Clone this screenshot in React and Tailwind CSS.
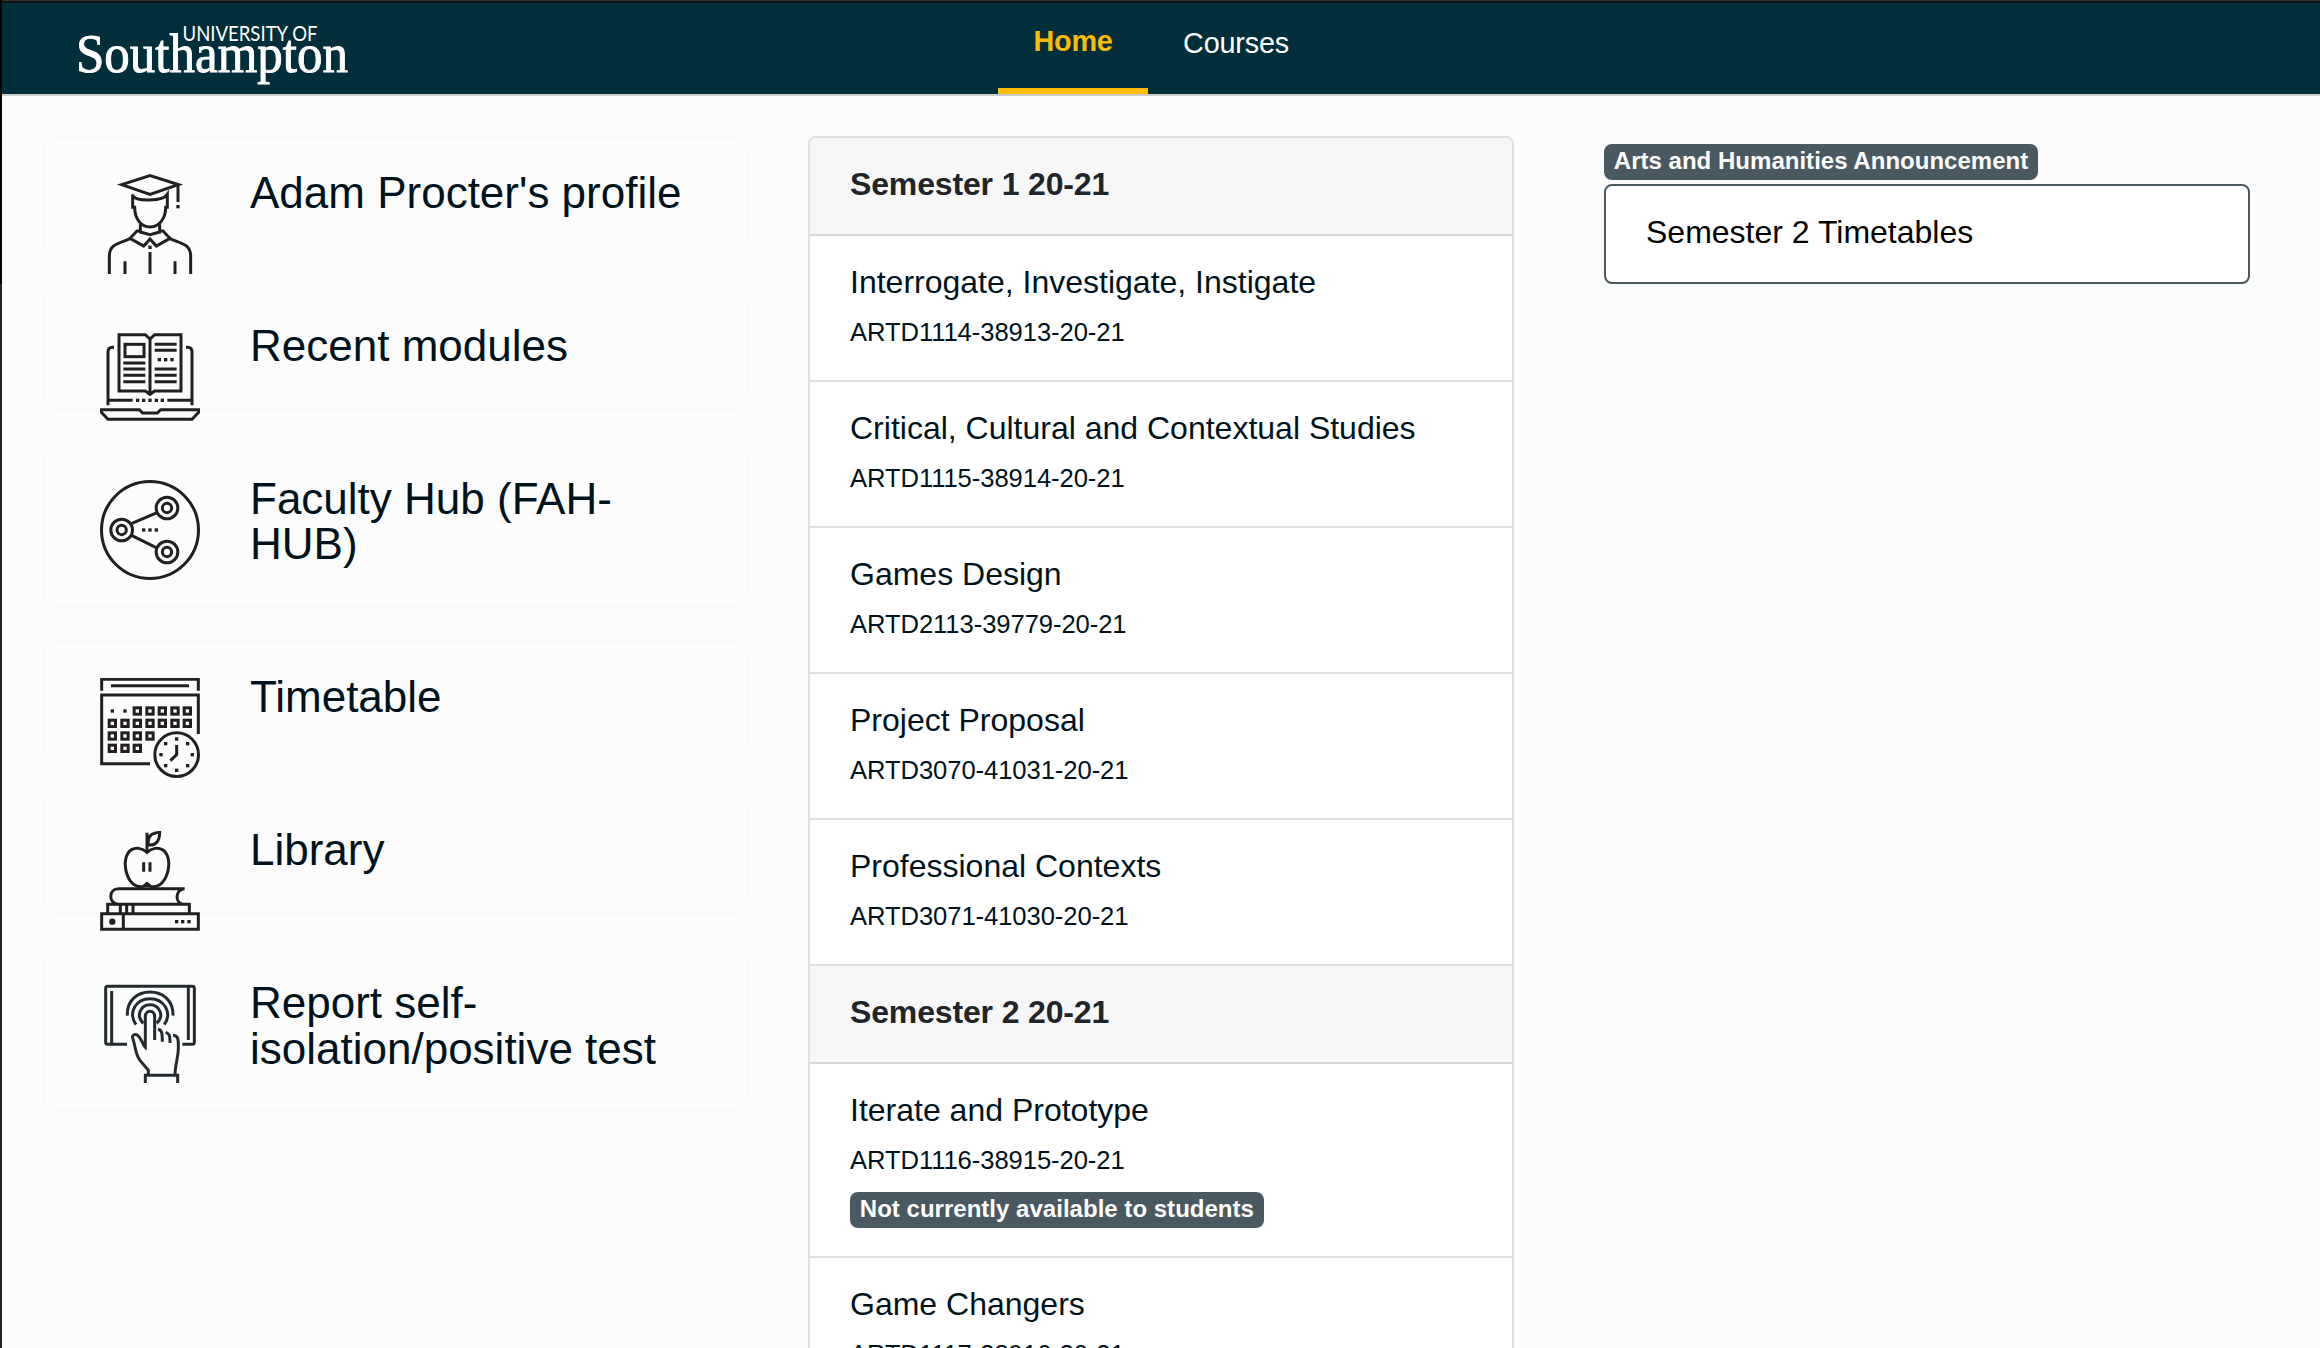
import React from "react";

const ink = "#231f20";

function Icon({ top, color = ink, children }) {
  return (
    <svg
      className="h-[100px] w-[100px] shrink-0"
      viewBox={`60 ${top} 300 300`}
      fill="none"
      stroke={color}
      strokeWidth="9"
    >
      {children}
    </svg>
  );
}

function Dots({ points, size = 10, color = ink }) {
  return (
    <g fill={color} stroke="none">
      {points.map(([x, y]) => (
        <rect key={`${x}-${y}`} x={x - size / 2} y={y - size / 2} width={size} height={size} />
      ))}
    </g>
  );
}

function GraduateIcon() {
  return (
    <Icon top={42}>
      <path d="M125 74 L210 47 L295 74 L210 103 Z" />
      <path d="M294 72 V126" />
      <path d="M158 103 V142 H164 C164 178 184 201 210 201 C236 201 257 178 257 142 H262 V103 C248 125 172 125 158 108" />
      <path d="M181 193 V216 L210 224 L239 216 V193" />
      <path d="M181 213 H171 L150 235 L191 258 L210 237 L229 258 L270 235 L249 213 H239" />
      <path d="M88 342 V287 C88 251 122 249 152 235 M332 342 V287 C332 251 298 249 268 235" />
      <path d="M135 304 V342 M210 276 V342 M285 304 V342" />
      <Dots points={[[294, 140], [210, 262]]} />
    </Icon>
  );
}

function ModulesIcon() {
  return (
    <Icon top={51}>
      <path d="M117 74 H196 L210 87 L224 74 H303 V243 H224 L210 253 L196 243 H117 Z M210 84 V252" />
      <rect x="135" y="103" width="57" height="37" />
      <path d="M130 159 H196 M130 177 H196 M130 196 H196 M130 215 H196 M224 103 H290 M224 121 H290 M224 177 H290 M224 196 H290 M224 215 H290" />
      <path d="M102 112 H98 Q84 112 84 126 V286 M318 112 H322 Q336 112 336 126 V286 M84 271 H158 M262 271 H336" />
      <path d="M64 299 H178 L188 309 H232 L242 299 H356 V307 L336 328 H84 L64 307 Z" />
      <Dots points={[[238, 149], [257, 149], [276, 149], [173, 271], [191, 271], [210, 271], [229, 271], [247, 271]]} />
    </Icon>
  );
}

function HubIcon() {
  return (
    <Icon top={60}>
      <circle cx="210" cy="210" r="145.500" />
      {[[125, 210], [261, 144], [261, 276]].map(([x, y]) => (
        <g key={`${x}-${y}`}>
          <circle cx={x} cy={y} r="32.500" />
          <circle cx={x} cy={y} r="14" />
        </g>
      ))}
      <path d="M154 191 L233 157 M156 227 L233 265" />
      <Dots points={[[191, 210], [210, 210], [229, 210]]} />
    </Icon>
  );
}

const columns = [97, 135, 172, 210, 247, 285, 322];
const dayCells = [
  ...columns.slice(2).map((x) => [x, 153]),
  ...columns.map((x) => [x, 190]),
  ...columns.slice(0, 4).map((x) => [x, 228]),
  ...columns.slice(0, 3).map((x) => [x, 265]),
];

function TimetableIcon() {
  return (
    <Icon top={54}>
      <path d="M65 92 V58 H355 V92 M93 77 H327" />
      <path d="M210 311 H65 V105 H355 V222" />
      {dayCells.map(([x, y]) => (
        <rect key={`${x}-${y}`} x={x - 9.5} y={y - 9.5} width="19" height="19" />
      ))}
      <circle cx="290" cy="284" r="70" fill="#fcfcfc" stroke="none" />
      <circle cx="290" cy="284" r="65.500" />
      <path d="M290 255 V284 L271 302" />
      <Dots points={[[97, 153], [135, 153], [290, 237], [323, 251], [337, 284], [323, 317], [290, 331], [257, 317], [243, 284], [257, 251]]} />
    </Icon>
  );
}

function LibraryIcon() {
  return (
    <Icon top={48}>
      <path d="M201 53 V112 M205 90 C202 60 217 54 239 52 C239 82 225 92 205 90 Z" />
      <path d="M201 112 C186 98 167 97 155 104 C137 114 130 145 141 178 C151 209 172 219 190 214 L201 205 L212 214 C230 219 250 209 261 178 C272 145 265 114 247 104 C235 97 216 98 201 112 Z" />
      <path d="M191 142 V170 M210 142 V170" />
      <path d="M314 221 H116 C84 221 86 265 112 268 M312 221 C286 225 284 262 308 268" />
      <path d="M83 295 V268 H328 V295 M121 268 V295 M140 268 V295 M159 268 V295" />
      <path d="M65 296 H355 V343 H65 Z M130 296 V343" />
      <path d="M193 216 L201 203 L209 216 Z" fill={ink} stroke="none" />
      <circle cx="97" cy="320" r="9.500" fill={ink} stroke="none" />
      <Dots points={[[290, 320], [308, 320], [327, 320]]} />
    </Icon>
  );
}

function TouchIcon() {
  return (
    <Icon top={42} color="#232b2e">
      <path d="M141 223 H83 Q77 223 77 217 V55 Q77 49 83 49 H337 Q343 49 343 55 V217 Q343 223 337 223 H307" />
      <path d="M95 63 V223 M325 49 V210" />
      <path d="M142 137 C137 42 283 42 279 137" />
      <path d="M168 164 C143 127 168 86 210 86 C252 86 278 127 253 164" />
      <path d="M190 160 C167 138 181 104 210 104 C239 104 254 138 230 160" />
      <path d="M224 210 V139 C224 119 196 119 196 139 V232 C189 226 183 203 174 197 C168 190 155 194 158 204 C166 226 166 254 180 271 L205 301 V317" />
      <path d="M234 178 C245 180 247 187 247 215 M257 187 C268 190 270 196 270 219 M279 196 C291 197 295 202 295 224 C297 260 285 280 285 317" />
      <path d="M196 339 V316 H293 V339" />
    </Icon>
  );
}

const shortcuts = [
  { label: ["Adam Procter's profile"], icon: GraduateIcon },
  { label: ["Recent modules"], icon: ModulesIcon },
  { label: ["Faculty Hub (FAH-", "HUB)"], icon: HubIcon },
  { label: ["Timetable"], icon: TimetableIcon },
  { label: ["Library"], icon: LibraryIcon },
  { label: ["Report self-", "isolation/positive test"], icon: TouchIcon },
];

const semesters = [
  {
    name: "Semester 1 20-21",
    modules: [
      { title: "Interrogate, Investigate, Instigate", code: "ARTD1114-38913-20-21" },
      { title: "Critical, Cultural and Contextual Studies", code: "ARTD1115-38914-20-21" },
      { title: "Games Design", code: "ARTD2113-39779-20-21" },
      { title: "Project Proposal", code: "ARTD3070-41031-20-21" },
      { title: "Professional Contexts", code: "ARTD3071-41030-20-21" },
    ],
  },
  {
    name: "Semester 2 20-21",
    modules: [
      { title: "Iterate and Prototype", code: "ARTD1116-38915-20-21", hidden: true },
      { title: "Game Changers", code: "ARTD1117-38916-20-21" },
    ],
  },
];

function Badge({ children }) {
  return (
    <span className="block h-9 w-fit whitespace-nowrap rounded-lg bg-[#495961] px-[9.8px] text-[24px] leading-[33px] font-bold tracking-[0.02px] text-white">
      {children}
    </span>
  );
}

function Logo() {
  return (
    <svg className="ml-[68px] h-[91px] w-[285px] overflow-visible" viewBox="70 3 285 91" fill="#fff">
      <text
        x="182.500"
        y="40.500"
        fontFamily="Lato, sans-serif"
        fontSize="20.500"
        textLength="135"
        lengthAdjust="spacingAndGlyphs"
      >
        UNIVERSITY OF
      </text>
      <text
        x="76"
        y="71.500"
        fontFamily="'Liberation Serif', serif"
        fontSize="54"
        textLength="272"
        lengthAdjust="spacingAndGlyphs"
        stroke="#fff"
        strokeWidth="0.900"
      >
        Southampton
      </text>
    </svg>
  );
}

export default function App() {
  return (
    <div className="flex h-[1348px] w-[2320px] overflow-hidden bg-[#fcfcfc] font-['Liberation_Sans',Arial,sans-serif] text-[#00131d]">
      <div className="flex w-0.5 shrink-0 flex-col">
        <div className="h-[284px] bg-black" />
        <div className="grow bg-[#222426]" />
      </div>
      <div className="flex min-w-0 grow flex-col">
        <div className="h-px shrink-0 bg-[#333]" />
        <div className="h-0.5 shrink-0 bg-[#111]" />
        <header className="flex h-[93px] shrink-0 border-b-2 border-[#ccc] bg-[#002e3b] text-[28.8px] leading-8">
          <Logo />
          <nav className="ml-[643px] flex">
            <a className="w-[150px] border-b-6 border-[#fcbc00] pt-[22px] text-center font-bold tracking-[-0.2px] text-[#fcbc00]">
              Home
            </a>
            <a className="w-[176px] pt-6 text-center tracking-[-0.2px] text-white">Courses</a>
          </nav>
        </header>

        <main className="flex items-start pl-10">
          <section className="mt-10 flex w-[706px] flex-col gap-8">
            {shortcuts.map(({ label, icon: Glyph }) => (
              <a
                key={label[0]}
                className={`flex shrink-0 items-start rounded-2xl border-2 border-[#f9f9f9] pt-9 pl-14 ${
                  label.length > 1 ? "h-[166.560px]" : "h-[120.800px]"
                }`}
              >
                <Glyph />
                <span className="-mt-1 ml-[50px] text-[44px] leading-[45.76px]">
                  {label.map((line) => (
                    <span key={line} className="block whitespace-nowrap">
                      {line}
                    </span>
                  ))}
                </span>
              </a>
            ))}
          </section>

          <section className="mt-10 ml-[60px] w-[706px] overflow-hidden rounded-lg border-2 border-[#dfdfdf] bg-white">
            {semesters.map(({ name, modules }) => (
              <div key={name}>
                <h2 className="h-[98px] border-b-2 border-[#d8d8d8] bg-[#f7f7f7] px-10 text-[32px] leading-[92px] font-bold tracking-[-0.15px] text-[#212529]">
                  {name}
                </h2>
                {modules.map(({ title, code, hidden }) => (
                  <article key={code} className="border-b-2 border-[#dfdfdf] px-10 py-7">
                    <h3 className="text-[32px] leading-9">{title}</h3>
                    <p className="mt-3 text-[25.6px] leading-10 tracking-[-0.07px]">{code}</p>
                    {hidden && (
                      <div className="mt-3">
                        <Badge>Not currently available to students</Badge>
                      </div>
                    )}
                  </article>
                ))}
              </div>
            ))}
          </section>

          <aside className="mt-12 ml-[90px] flex w-[646px] flex-col gap-1">
            <Badge>Arts and Humanities Announcement</Badge>
            <a className="h-[100px] rounded-lg border-2 border-[#495961] bg-white px-10 text-[32px] leading-[92px] text-black">
              Semester 2 Timetables
            </a>
          </aside>
        </main>
      </div>
    </div>
  );
}
